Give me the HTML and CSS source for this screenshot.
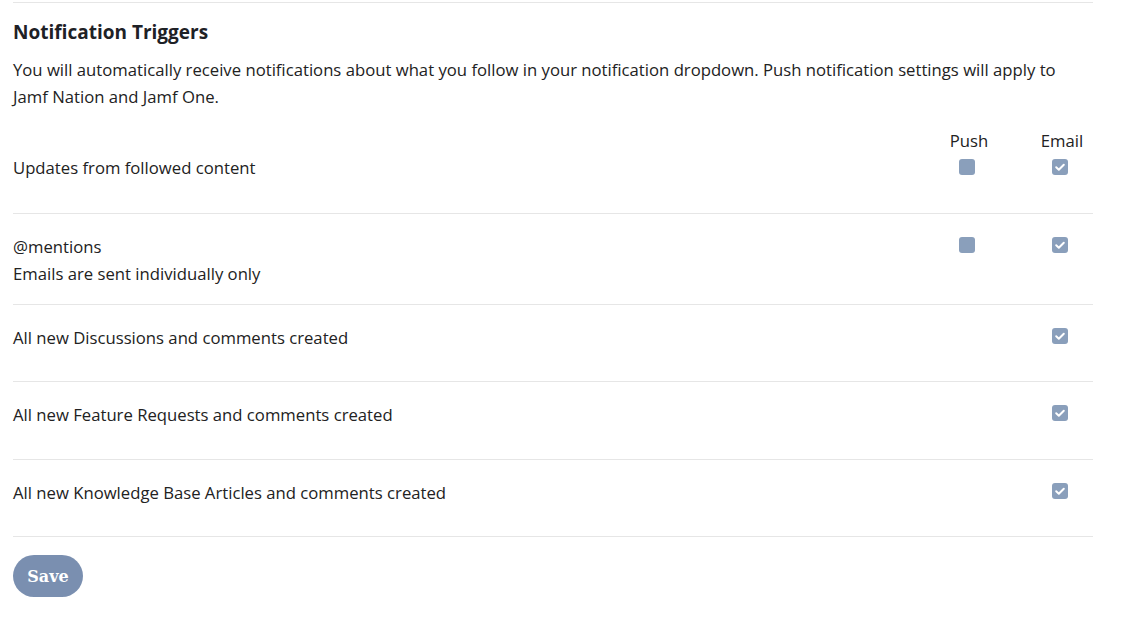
FILE: index.html
```html
<!DOCTYPE html>
<html>
<head>
<meta charset="utf-8">
<link rel="stylesheet" href="styles.css">
</head>
<body>
<div class="page">
  <section class="panel">
    <h2 class="title">Notification Triggers</h2>
    <p class="intro">You will automatically receive notifications about what you follow in your notification dropdown. Push notification settings will apply to Jamf Nation and Jamf One.</p>
    <div class="head">
      <div></div>
      <div class="col">Push</div>
      <div class="col">Email</div>
    </div>
    <div class="row first">
      <div class="label">Updates from followed content</div>
      <div class="col"><span class="box"></span></div>
      <div class="col"><span class="box checked"><svg viewBox="0 0 16 16"><path d="M4.2 8.3l2.6 2.4 5-5" /></svg></span></div>
    </div>
    <div class="row">
      <div class="label">@mentions<br>Emails are sent individually only</div>
      <div class="col"><span class="box"></span></div>
      <div class="col"><span class="box checked"><svg viewBox="0 0 16 16"><path d="M4.2 8.3l2.6 2.4 5-5" /></svg></span></div>
    </div>
    <div class="row">
      <div class="label">All new Discussions and comments created</div>
      <div class="col"></div>
      <div class="col"><span class="box checked"><svg viewBox="0 0 16 16"><path d="M4.2 8.3l2.6 2.4 5-5" /></svg></span></div>
    </div>
    <div class="row tall">
      <div class="label">All new Feature Requests and comments created</div>
      <div class="col"></div>
      <div class="col"><span class="box checked"><svg viewBox="0 0 16 16"><path d="M4.2 8.3l2.6 2.4 5-5" /></svg></span></div>
    </div>
    <div class="row">
      <div class="label">All new Knowledge Base Articles and comments created</div>
      <div class="col"></div>
      <div class="col"><span class="box checked"><svg viewBox="0 0 16 16"><path d="M4.2 8.3l2.6 2.4 5-5" /></svg></span></div>
    </div>
    <button class="save">Save</button>
  </section>
</div>
</body>
</html>
```
FILE: styles.css
```css
html, body {
  margin: 0;
  padding: 0;
  background: #fff;
}
body {
  font-family: "Open Sans", Lato, sans-serif;
  color: #222;
}
.page {
  padding: 0 38px 0 13px;
}
.panel {
  width: 1080px;
  border-top: 1px solid #e6e6e6;
  margin-top: 2px;
}
.title {
  margin: 17px 0 0;
  font-size: 19px;
  line-height: 24px;
  font-weight: 700;
  color: #1e2126;
}
.intro {
  margin: 12px 0 0;
  font-size: 16.7px;
  line-height: 27px;
}
.head, .row {
  display: grid;
  grid-template-columns: 1fr 64px 62px;
  column-gap: 30px;
}
.head {
  margin-top: 17px;
  font-size: 16.7px;
  line-height: 27px;
}
.head .col {
  text-align: center;
}
.row {
  padding: 19px 0 17px;
  border-bottom: 1px solid #e6e6e6;
  font-size: 16.7px;
  line-height: 27px;
}
.row.first {
  padding-top: 0;
}
.row.tall {
  padding-bottom: 18px;
}
.label {
  min-height: 40px;
}
.row.first .label {
  min-height: 42px;
}
.row .col {
  display: flex;
  justify-content: center;
  align-items: flex-start;
  padding-top: 4px;
}
.row.first .col {
  padding-top: 5px;
}
.box {
  width: 16px;
  height: 16px;
  border-radius: 3px;
  background: #8a9fbb;
  margin-right: 5px;
  display: flex;
}
.box svg {
  width: 16px;
  height: 16px;
  fill: none;
  stroke: #fff;
  stroke-width: 2;
  stroke-linecap: round;
  stroke-linejoin: round;
}
.save {
  margin-top: 18px;
  width: 70px;
  height: 42px;
  border: none;
  border-radius: 21px;
  background: #7a8fb0;
  color: #fff;
  font-family: "DejaVu Serif", serif;
  font-weight: 700;
  font-size: 16px;
  padding: 0;
}
```
